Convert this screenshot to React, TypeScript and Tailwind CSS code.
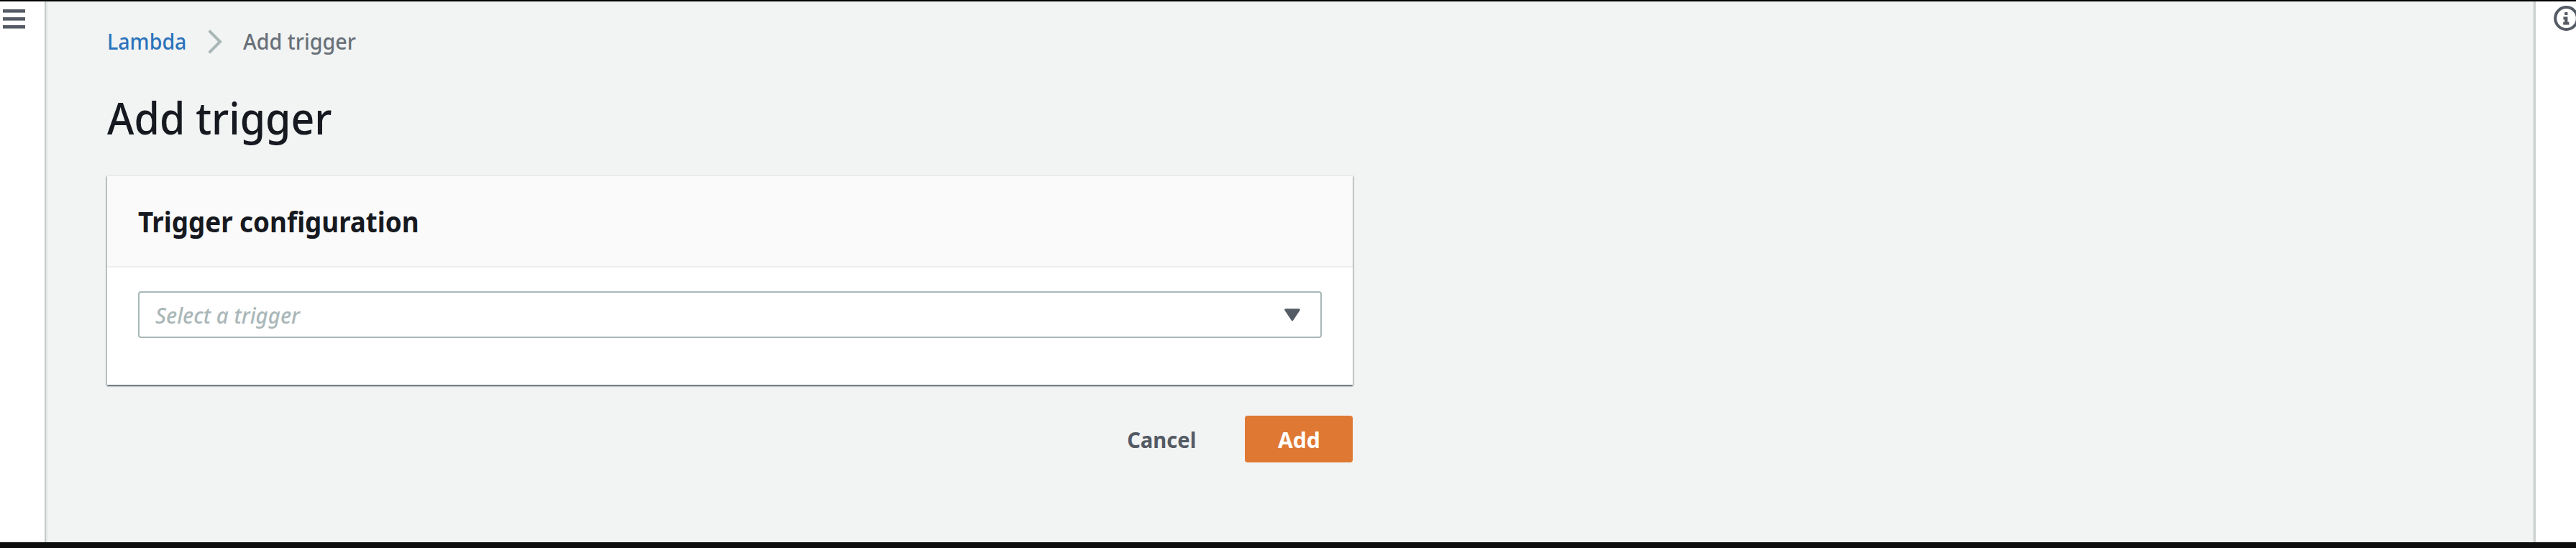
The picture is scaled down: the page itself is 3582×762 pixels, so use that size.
export default function App() {
  return (
    <div className="flex h-[762px] w-full flex-col overflow-hidden border-t-2 border-b-8 border-t-black border-b-[#0d0d0e] bg-white font-['Noto_Sans',sans-serif]">
      <div className="flex min-h-0 flex-1">
        <aside className="w-[62px] shrink-0 pt-[10.5px] pl-1">
          <svg width="31" height="27" viewBox="0 0 31 27" fill="#545b64">
            <rect width="31" height="4.6" />
            <rect y="11" width="31" height="4.6" />
            <rect y="22" width="31" height="4.6" />
          </svg>
        </aside>

        <main className="min-w-0 flex-1 border-l-2 border-[#c4c9c9] bg-[#f2f3f3] pl-[85px] shadow-[inset_2px_0_2px_#e3e6e6,inset_-1px_0_1px_#e3e6e6]">
          <nav className="flex h-[77px] items-start pt-[35px] text-[30.5px] leading-10 font-medium">
            <a className="w-[140px] origin-left scale-x-[0.937] text-[#2b73bb]">Lambda</a>
            <svg className="mt-1" width="20" height="34" viewBox="0 0 20 34" fill="none" stroke="#aab7b8" strokeWidth="4">
              <path d="M1.7 1.7 17 17 1.7 32.3" />
            </svg>
            <span className="ml-[29px] origin-left scale-x-[0.94] text-[#687078]">Add trigger</span>
          </nav>
          <h1 className="mt-[45px] w-fit origin-left scale-x-[0.937] text-[61px] leading-20 font-medium text-[#16191f]">Add trigger</h1>

          <section className="mt-[40px] h-[291px] w-[1732px] border-t border-[#eaeded] bg-white shadow-[0_2px_2px_0_rgba(0,28,36,0.5),1px_1px_2px_0_rgba(0,28,36,0.25),-1px_1px_2px_0_rgba(0,28,36,0.25)]">
            <header className="h-[127px] border-b-2 border-[#eceeee] bg-[#fafafa] pt-[39px] pl-[43px]">
              <h2 className="w-fit origin-left scale-x-[0.942] text-[39px] leading-12 font-bold text-[#16191f]">Trigger configuration</h2>
            </header>
            <div className="px-[43px] pt-[33px]">
              <div className="flex h-[65px] items-center justify-between rounded-[4px] border-2 border-[#aab7b8] pr-[28px] pl-[22px]">
                <span className="origin-left scale-x-[0.947] text-[31px] leading-10 font-medium text-[#aab7b8] italic">Select a trigger</span>
                <svg width="22" height="18" viewBox="0 0 22 18" fill="#545b64" stroke="#545b64" strokeWidth="3" strokeLinejoin="round">
                  <path d="M1.7 1.7h18.6L11 15.7z" />
                </svg>
              </div>
            </div>
          </section>

          <div className="mt-[43px] flex w-[1732px] items-center justify-end text-[31px] leading-10 font-bold">
            <button className="mr-[68px] origin-right scale-x-[0.94] text-[#545b64]">Cancel</button>
            <button className="h-[65px] w-[150px] rounded-[4px] bg-[#df7832] text-white">
              <span className="inline-block scale-x-[0.97]">Add</span>
            </button>
          </div>
        </main>

        <aside className="w-[59px] shrink-0 overflow-hidden border-l-3 border-[#ccd1d1] pt-[6px] pl-[25px]">
          <svg width="35" height="35" viewBox="0 0 35 35" fill="#545b64">
            <circle cx="17.5" cy="17.5" r="15.4" fill="none" stroke="#545b64" strokeWidth="4" />
            <path d="M15.2 9h4.2v4h-4.2zM13.4 15.3h6v7.2h2v4h-8.2v-4h2v-3.2h-1.8z" />
          </svg>
        </aside>
      </div>
    </div>
  );
}
